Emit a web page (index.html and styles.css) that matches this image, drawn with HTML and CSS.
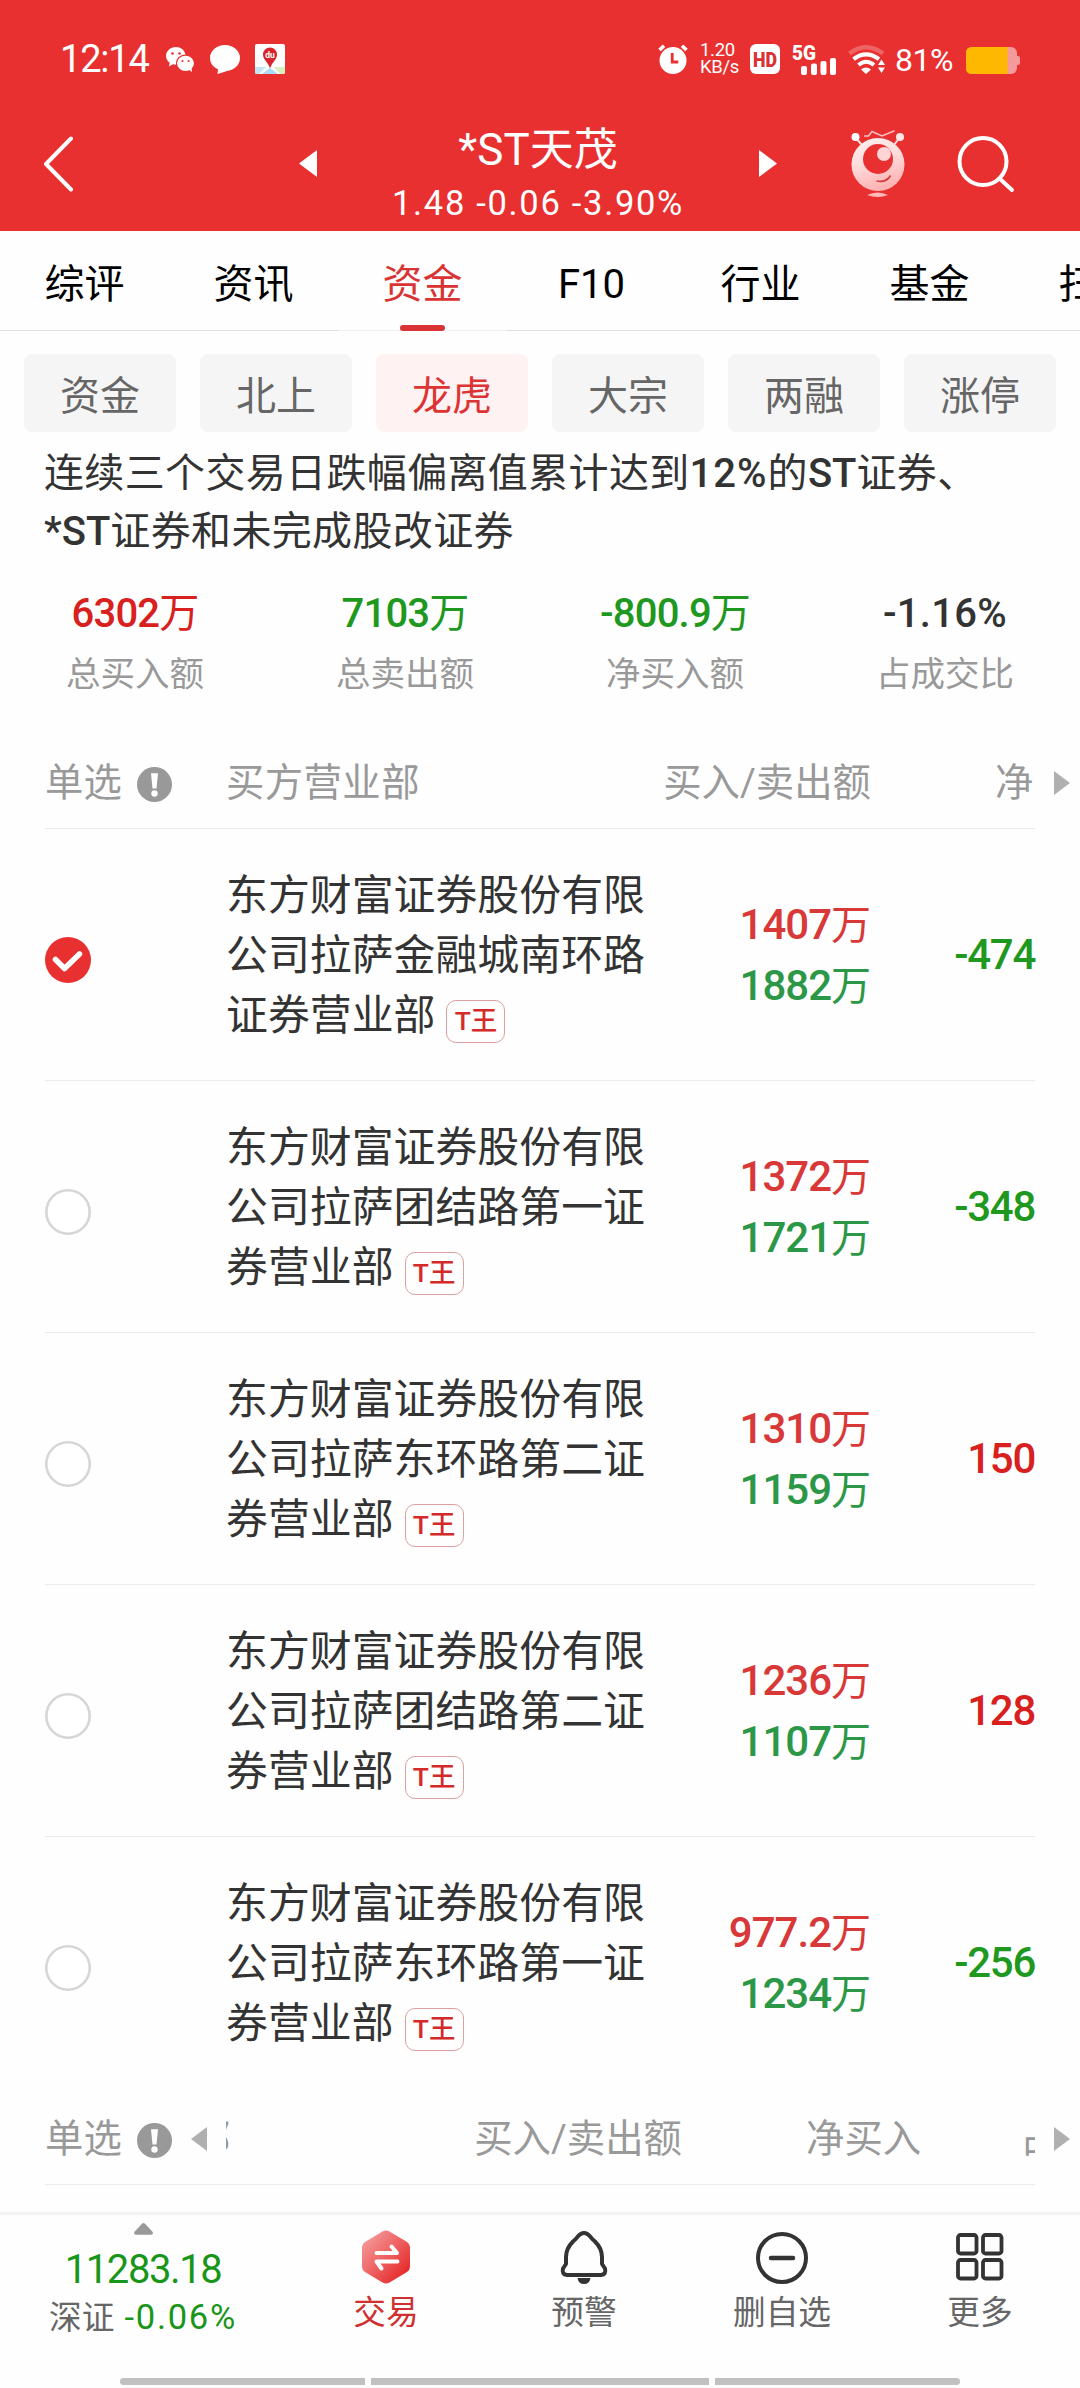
FILE: index.html
```html
<!DOCTYPE html>
<html lang="zh-CN">
<head>
<meta charset="utf-8">
<title>*ST天茂</title>
<link rel="stylesheet" href="styles.css">
</head>
<body>
<svg class="defs" aria-hidden="true">
  <symbol id="info" viewBox="0 0 35 35"><circle cx="17.5" cy="17.5" r="17.5" fill="#999"/><path d="M14 6.2h7l-1.5 15.3h-4z" fill="#fff"/><circle cx="17.5" cy="26.5" r="3.2" fill="#fff"/></symbol>
  <symbol id="radio" viewBox="0 0 46 46"><circle cx="23" cy="23" r="21.7" fill="#fff" stroke="#d6d6d6" stroke-width="2.6"/></symbol>
  <symbol id="next" viewBox="0 0 16 24"><path d="M0 0l16 12L0 24z" fill="#b0b0b0"/></symbol>
</svg>
<header class="header">
  <div class="status">
    <span class="clock">12:14</span>
    <svg class="wechat" width="28" height="25" viewBox="0 0 28 25"><path fill="#fff" d="M10 0C4.400 0 0 4 0 9c0 2.800 1.500 5.200 3.700 6.800L3 19.500l4-2.200c1 .3 2 .4 3 .4C9.500 11.500 14 7.500 19.500 7.400 18.500 3 14.600 0 10 0z"/><ellipse cx="19.500" cy="16.300" rx="8.500" ry="7.600" fill="#fff"/><path d="M22 22l4 3-.6-4.500z" fill="#fff"/><g fill="#e83030"><circle cx="6.500" cy="6.500" r="1.300"/><circle cx="13.500" cy="6.500" r="1.300"/><circle cx="16.500" cy="14" r="1.100"/><circle cx="22.500" cy="14" r="1.100"/></g></svg>
    <svg class="bubble" width="30" height="29" viewBox="0 0 30 29"><path fill="#fff" d="M15 0c8.300 0 15 5.700 15 13s-6.500 12.500-13 13c-3 .8-6 2.300-9.500 3l.5-4.700C3 22 0 18 0 13 0 5.700 6.700 0 15 0z"/></svg>
    <svg class="map" width="30" height="30" viewBox="0 0 30 30"><rect width="30" height="30" rx="2" fill="#fff"/><path d="M0 23h11L4 30H1l-1-1z" fill="#bfe6f8"/><path d="M19 23h11v6l-1 1h-4z" fill="#d3f0c0"/><path d="M7 30l8-6 8 6z" fill="#a9dcf7"/><path d="M15 24.500C13 18 8 15.500 8 10.500a7 7 0 0 1 14 0c0 5-5 7.500-7 14z" fill="#d8232b"/><text x="15" y="14" text-anchor="middle" font-size="8.500" font-weight="700" fill="#fff">du</text></svg>
    <div class="status-right">
      <svg width="30" height="30" viewBox="0 0 30 30"><circle cx="15" cy="16.500" r="13.500" fill="#fff"/><path d="M1.500 6L6 1.800M28.500 6L24 1.800" stroke="#fff" stroke-width="3.600"/><path d="M14.200 9v9h6" fill="none" stroke="#e83030" stroke-width="2.800"/></svg>
      <div class="speed"><span>1.20</span><span>KB/s</span></div>
      <svg class="hd" width="30" height="30" viewBox="0 0 30 30"><rect width="30" height="30" rx="6" fill="#fff"/><text x="15" y="22.500" text-anchor="middle" font-size="21" font-weight="900" textLength="24" lengthAdjust="spacingAndGlyphs" fill="#d83232">HD</text></svg>
      <svg class="cell" width="46" height="31" viewBox="0 0 46 31"><text x="0" y="15.500" font-size="20" font-weight="900" textLength="24" lengthAdjust="spacingAndGlyphs" fill="#fff">5G</text><g fill="#fff"><rect x="9" y="22" width="6" height="9" rx="2"/><rect x="19" y="19.500" width="6" height="11.500" rx="2"/><rect x="28.500" y="17" width="6" height="14" rx="2"/><rect x="38" y="14" width="6" height="17" rx="2"/></g></svg>
      <svg class="wifi" width="38" height="29" viewBox="0 0 38 29"><g fill="none" stroke="#fff"><path d="M1.500 8.500Q18 -4 35 8.500" stroke-width="4.500" opacity=".25"/><path d="M5.500 14.200Q18 4.500 31 14.200" stroke-width="4"/><path d="M10.500 20Q18 13.500 26 20" stroke-width="4"/></g><path d="M13 24.500Q18 20.500 23 24.500L18 29z" fill="#fff"/><path d="M30 20l3.500-5.500L37 20zM30 22.500h7L33.500 28z" fill="#fff"/></svg>
      <span class="percent">81%</span>
      <svg class="battery" width="54" height="27" viewBox="0 0 54 27"><rect width="51" height="27" rx="6" fill="#f59a9a"/><path d="M51 9h1q2 0 2 2v5q0 2-2 2h-1z" fill="#f59a9a"/><path d="M6 0h35.500v27H6q-6 0-6-6V6q0-6 6-6z" fill="#ffb800"/></svg>
    </div>
  </div>
  <nav class="nav">
    <div class="back"><svg width="30" height="56" viewBox="0 0 30 56"><path d="M28 2.500L3 28l25 25.500" fill="none" stroke="#fff" stroke-width="4" stroke-linecap="round" stroke-linejoin="round"/></svg></div>
    <svg width="18" height="27" viewBox="0 0 18 27"><path d="M18 0v27L0 13.500z" fill="#fff"/></svg>
    <div class="title"><h1>*ST天茂</h1><p>1.48 -0.06 -3.90%</p></div>
    <svg width="18" height="27" viewBox="0 0 18 27"><path d="M0 0v27l18-13.500z" fill="#fff"/></svg>
    <svg class="robot" width="54" height="68" viewBox="0 0 54 68">
      <defs><linearGradient id="rg" x1="0" y1="0" x2="0.300" y2="1"><stop offset="0" stop-color="#fff0f0"/><stop offset=".5" stop-color="#ffdcdc"/><stop offset="1" stop-color="#ffb4b4"/></linearGradient></defs>
      <path d="M4 7l7 8M49 7l-6 8" stroke="#ffdcdc" stroke-width="2"/>
      <circle cx="4.500" cy="7" r="4" fill="#fff"/><circle cx="49" cy="7" r="4" fill="#ffe6e6"/>
      <path d="M13 6h4.500l3.500-4.500L31 6 43.500.8" fill="none" stroke="#ffc0c0" stroke-width="1.500"/>
      <circle cx="27" cy="34.500" r="26.500" fill="url(#rg)"/><circle cx="27" cy="29" r="15" fill="#e83030"/><circle cx="33" cy="24" r="7" fill="#ffd4d4"/>
      <path d="M25.500 51q10 2 14-5.500" fill="none" stroke="#d83a3a" stroke-width="1.600"/><path d="M16 65q11-5 21 0-10 4-21 0z" fill="#ffb9b9"/>
    </svg>
    <svg class="search" width="58" height="58" viewBox="0 0 58 58"><circle cx="26" cy="26.500" r="23.500" fill="none" stroke="#fff" stroke-width="4"/><path d="M42.500 43.500L55 55" stroke="#fff" stroke-width="4" stroke-linecap="round"/></svg>
  </nav>
</header>
<div class="tabs">
  <a>综评</a><a>资讯</a><a class="on">资金</a><a>F10</a><a>行业</a><a>基金</a><a>扫雷</a>
</div>
<div class="chips">
  <a>资金</a><a>北上</a><a class="on">龙虎</a><a>大宗</a><a>两融</a><a>涨停</a>
</div>
<main class="content">
  <p class="reason">连续三个交易日跌幅偏离值累计达到<b class="pct">12%</b>的<b>ST</b>证券、<br><b>*ST</b>证券和未完成股改证券</p>
  <div class="stats">
    <div><span class="value red">6302<i>万</i></span><span class="label">总买入额</span></div>
    <div><span class="value green">7103<i>万</i></span><span class="label">总卖出额</span></div>
    <div><span class="value green">-800.9<i>万</i></span><span class="label">净买入额</span></div>
    <div><span class="value ratio">-1.16%</span><span class="label">占成交比</span></div>
  </div>
  <div class="head">
    <div class="pick">单选<svg class="info"><use href="#info"/></svg></div>
    <div class="scroll"><div class="cols"><span class="c1">买方营业部</span><span class="c2">买入/卖出额</span><span class="c3">净买入</span><span>占成交比</span></div></div>
    <svg class="next"><use href="#next"/></svg>
  </div>
  <div class="row">
    <div class="mark"><svg viewBox="0 0 46 46"><circle cx="23" cy="23" r="23" fill="#e83030"/><path d="M10.500 22.500l9 9L34.500 17" fill="none" stroke="#fff" stroke-width="5.500" stroke-linecap="round" stroke-linejoin="round"/></svg></div>
    <div class="name">东方财富证券股份有限公司拉萨金融城南环路证券营业部<span class="tag">T王</span></div>
    <div class="amount"><span class="buy">1407<i>万</i></span><span class="sell">1882<i>万</i></span></div>
    <div class="net green">-474</div>
  </div>
  <div class="row">
    <div class="mark"><svg><use href="#radio"/></svg></div>
    <div class="name">东方财富证券股份有限公司拉萨团结路第一证券营业部<span class="tag">T王</span></div>
    <div class="amount"><span class="buy">1372<i>万</i></span><span class="sell">1721<i>万</i></span></div>
    <div class="net green">-348</div>
  </div>
  <div class="row">
    <div class="mark"><svg><use href="#radio"/></svg></div>
    <div class="name">东方财富证券股份有限公司拉萨东环路第二证券营业部<span class="tag">T王</span></div>
    <div class="amount"><span class="buy">1310<i>万</i></span><span class="sell">1159<i>万</i></span></div>
    <div class="net red">150</div>
  </div>
  <div class="row">
    <div class="mark"><svg><use href="#radio"/></svg></div>
    <div class="name">东方财富证券股份有限公司拉萨团结路第二证券营业部<span class="tag">T王</span></div>
    <div class="amount"><span class="buy">1236<i>万</i></span><span class="sell">1107<i>万</i></span></div>
    <div class="net red">128</div>
  </div>
  <div class="row last">
    <div class="mark"><svg><use href="#radio"/></svg></div>
    <div class="name">东方财富证券股份有限公司拉萨东环路第一证券营业部<span class="tag">T王</span></div>
    <div class="amount"><span class="buy">977.2<i>万</i></span><span class="sell">1234<i>万</i></span></div>
    <div class="net green">-256</div>
  </div>
  <div class="head second">
    <div class="pick">单选<svg class="info"><use href="#info"/></svg><svg class="prev" viewBox="0 0 16 24"><path d="M16 0v24L0 12z" fill="#b0b0b0"/></svg></div>
    <div class="scroll"><div class="cols shifted"><span class="c1">买方营业部</span><span class="c2">买入/卖出额</span><span class="c3">净买入</span><span>占成交比</span></div></div>
    <svg class="next"><use href="#next"/></svg>
  </div>
</main>
<footer class="bar">
  <div class="bar-items">
    <div class="index">
      <svg width="19" height="12" viewBox="0 0 19 12"><path d="M8 .8q1.500-1.500 3 0l7.500 8q1.200 3-1.500 3H2q-2.700 0-1.500-3z" fill="#999"/></svg>
      <span class="point">11283.18</span>
      <span class="change">深证 <em>-0.06%</em></span>
    </div>
    <div class="item trade">
      <svg width="50" height="56" viewBox="0 0 50 56"><defs><linearGradient id="hg" x1="0" y1="0" x2="1" y2="1"><stop offset="0" stop-color="#f5a9a9"/><stop offset=".45" stop-color="#ef6767"/><stop offset=".85" stop-color="#e62e2e"/></linearGradient></defs><path d="M21.500 2.500q3.500-2 7 0L46 13q3 2 3 5v20q0 3-3 5L28.500 53.500q-3.500 2-7 0L4 43q-3-2-3-5V18q0-3 3-5z" fill="url(#hg)"/><path d="M15.500 24H36l-5.500-6.500M36.500 32.500H15.500l5 7" fill="none" stroke="#fff" stroke-width="4" stroke-linecap="round" stroke-linejoin="round"/></svg>
      <span>交易</span>
    </div>
    <div class="item">
      <svg width="50" height="56" viewBox="0 0 50 56"><path d="M18 8.500q7-9 14 0Q33 10 36 12.500q7 7 7 15.500v7l3 4.500q1.500 6-4 6.500H8q-5.500-.5-4-6.500L7 35v-7q0-8.500 7-15.500 3-2.500 4-4z" fill="none" stroke="#333" stroke-width="4" stroke-linejoin="round"/><path d="M18.500 49h13q-1 6-6.500 6t-6.500-6z" fill="#333"/></svg>
      <span>预警</span>
    </div>
    <div class="item">
      <svg width="54" height="56" viewBox="0 0 54 56"><circle cx="27" cy="29" r="24" fill="none" stroke="#333" stroke-width="4"/><path d="M16 29h22" stroke="#333" stroke-width="4.500" stroke-linecap="round"/></svg>
      <span>删自选</span>
    </div>
    <div class="item">
      <svg width="50" height="56" viewBox="0 0 50 56"><g fill="none" stroke="#333" stroke-width="3.800"><rect x="3" y="6" width="18.500" height="18.500" rx="2.500"/><rect x="28" y="6" width="18.500" height="18.500" rx="2.500"/><rect x="3" y="31" width="18.500" height="18.500" rx="2.500"/><rect x="28" y="31" width="18.500" height="18.500" rx="2.500"/></g></svg>
      <span>更多</span>
    </div>
  </div>
  <div class="gesture"><span></span><span class="wide"></span><span></span></div>
</footer>
</body>
</html>
```
FILE: styles.css
```css
* { box-sizing: border-box; margin: 0; padding: 0; }
body {
  width: 1080px; height: 2388px; overflow: hidden;
  display: flex; flex-direction: column;
  background: #fefefe; color: #333;
  font-family: Roboto, "Noto Sans CJK SC", sans-serif;
}
svg { display: block; flex: none; }
i, em { font-style: normal; }
.defs { position: absolute; width: 0; height: 0; }
.red { color: #d8201f; }
.green { color: #1f981f; }

.header { height: 231px; background: #e83030; color: #fff; flex: none; }
.status { height: 79px; padding: 39px 60px 0 60px; display: flex; align-items: center; }
.clock { width: 106px; font-size: 38px; line-height: 40px; letter-spacing: -1.2px; }
.bubble { margin-left: 16px; }
.map { margin-left: 15px; }
.status-right { margin-left: auto; display: flex; align-items: center; }
.speed { margin-left: 12px; width: 37px; display: flex; flex-direction: column; font-size: 18.5px; line-height: 17px; letter-spacing: -0.3px; white-space: nowrap; }
.hd { margin-left: 13px; }
.cell { margin-left: 12px; }
.wifi { margin-left: 10px; }
.percent { margin-left: 9px; width: 61px; font-size: 32px; line-height: 40px; letter-spacing: -0.5px; padding-top: 2px; }
.battery { margin-left: 10px; margin-top: 2px; }

.nav { height: 152px; padding-top: 17px; display: flex; align-items: center; }
.back { width: 299px; padding-left: 43px; }
.title { width: 442px; padding-top: 19px; text-align: center; }
.title h1 { font-size: 44px; font-weight: 400; line-height: 60px; }
.title p { font-size: 34.5px; line-height: 46px; letter-spacing: 1.7px; }
.robot { margin-left: 74px; }
.search { margin-left: 52px; }

.tabs { height: 100px; flex: none; display: flex; overflow: hidden; background: linear-gradient(#dedede, #dedede) 0 99px / 100% 1px no-repeat; color: #000; font-size: 40px; line-height: 107px; white-space: nowrap; }
.tabs a { flex: none; width: 169px; height: 100px; text-align: center; }
.tabs .on { color: #d93434; position: relative; background: linear-gradient(#f0f0f0, #f0f0f0) 0 99px / 100% 1px no-repeat; }
.tabs .on::after { content: ""; position: absolute; left: 62px; top: 94px; width: 45px; height: 6px; border-radius: 3px; background: #d93434; }

.chips { flex: none; padding: 23px 24px 0; display: flex; gap: 24px; }
.chips a { width: 152px; height: 78px; border-radius: 8px; background: #f5f5f5; color: #666; font-size: 40px; line-height: 85px; text-align: center; }
.chips .on { background: #fff2f2; color: #dc3434; }

.content { flex: none; height: 1780px; padding: 13px 0 0; }
.reason { padding-left: 44px; font-size: 40px; line-height: 57.6px; letter-spacing: 0.35px; white-space: nowrap; }
.reason b { font-weight: 500; letter-spacing: 0; }
.reason .pct { letter-spacing: 1px; }
.stats { display: grid; grid-template-columns: repeat(4, 1fr); padding-top: 24px; text-align: center; height: 176.800px; }
.value, .label { display: block; }
.value { font-size: 40px; font-weight: 500; line-height: 60px; letter-spacing: -0.8px; }
.value.ratio { letter-spacing: 0.3px; }
.value i, .amount i { font-weight: 400; }
.label { margin-top: 5px; font-size: 34.5px; line-height: 50px; color: #999; }

.head { height: 92px; margin: 0 11px 0 45px; display: flex; align-items: center; color: #999; font-size: 38.4px; line-height: 60px; background: linear-gradient(#ececec, #ececec) 0 100% / 990px 1px no-repeat; }
.pick { width: 181px; display: flex; align-items: center; flex: none; }
.info { width: 35px; height: 35px; margin: 4px 0 0 15px; }
.prev { width: 16px; height: 24px; margin-left: 19px; }
.scroll { width: 809px; overflow: hidden; flex: none; }
.cols { display: flex; white-space: nowrap; }
.cols span { flex: none; }
.shifted { margin-left: -189px; }
.c1 { width: 426px; letter-spacing: 0.4px; }
.c2 { width: 219px; text-align: right; }
.c3 { width: 338px; padding-left: 124px; }
.next { width: 16px; height: 24px; margin-left: 19px; }

.row { height: 252px; margin: 0 45px; display: flex; align-items: center; border-bottom: 1px solid #ececec; }
.row.last { border-bottom-color: transparent; margin-bottom: 4px; }
.mark { width: 181px; padding-top: 11px; }
.mark svg { width: 46px; height: 46px; }
.name { width: 426px; padding-top: 4px; font-size: 41.900px; line-height: 60px; }
.tag { display: inline-flex; justify-content: center; vertical-align: 0; width: 59px; height: 43px; margin-left: 11px; border: 1.500px solid #dda0a0; border-radius: 10px; color: #d42a2a; font-size: 26.5px; font-weight: 500; line-height: 39px; }
.amount { width: 219px; padding-top: 3px; display: flex; flex-direction: column; text-align: right; font-size: 42px; font-weight: 500; line-height: 60px; letter-spacing: -1px; }
.amount i { letter-spacing: 0; font-size: 40px; }
.buy { color: #d93838; }
.sell { color: #2b9747; }
.net { width: 164px; padding-top: 1px; text-align: right; font-size: 42px; font-weight: 500; letter-spacing: -1.3px; }

.bar { flex: none; height: 176px; border-top: 3px solid #f2f2f2; }
.bar-items { display: grid; grid-template-columns: 288px repeat(4, 198px); height: 163px; margin-left: -1px; }
.index { display: flex; flex-direction: column; align-items: center; padding-top: 8px; color: #199619; }
.point { margin-top: 12px; font-size: 40px; line-height: 46px; letter-spacing: -1.4px; }
.change { margin-top: -1px; font-size: 32.700px; line-height: 50px; color: #666; white-space: nowrap; }
.change em { margin-left: 2px; font-size: 34.5px; letter-spacing: 1.7px; color: #199619; }
.item { display: flex; flex-direction: column; align-items: center; padding-top: 14px; font-size: 32.700px; line-height: 50px; color: #666; }
.item span { margin-top: 3px; }
.trade { color: #d03030; }
.gesture { display: flex; gap: 6px; justify-content: center; }
.gesture span { width: 245px; height: 7px; background: #c1c1c1; }
.gesture .wide { width: 338px; }
.gesture span:first-child { border-radius: 4px 0 0 4px; }
.gesture span:last-child { border-radius: 0 4px 4px 0; }
```
